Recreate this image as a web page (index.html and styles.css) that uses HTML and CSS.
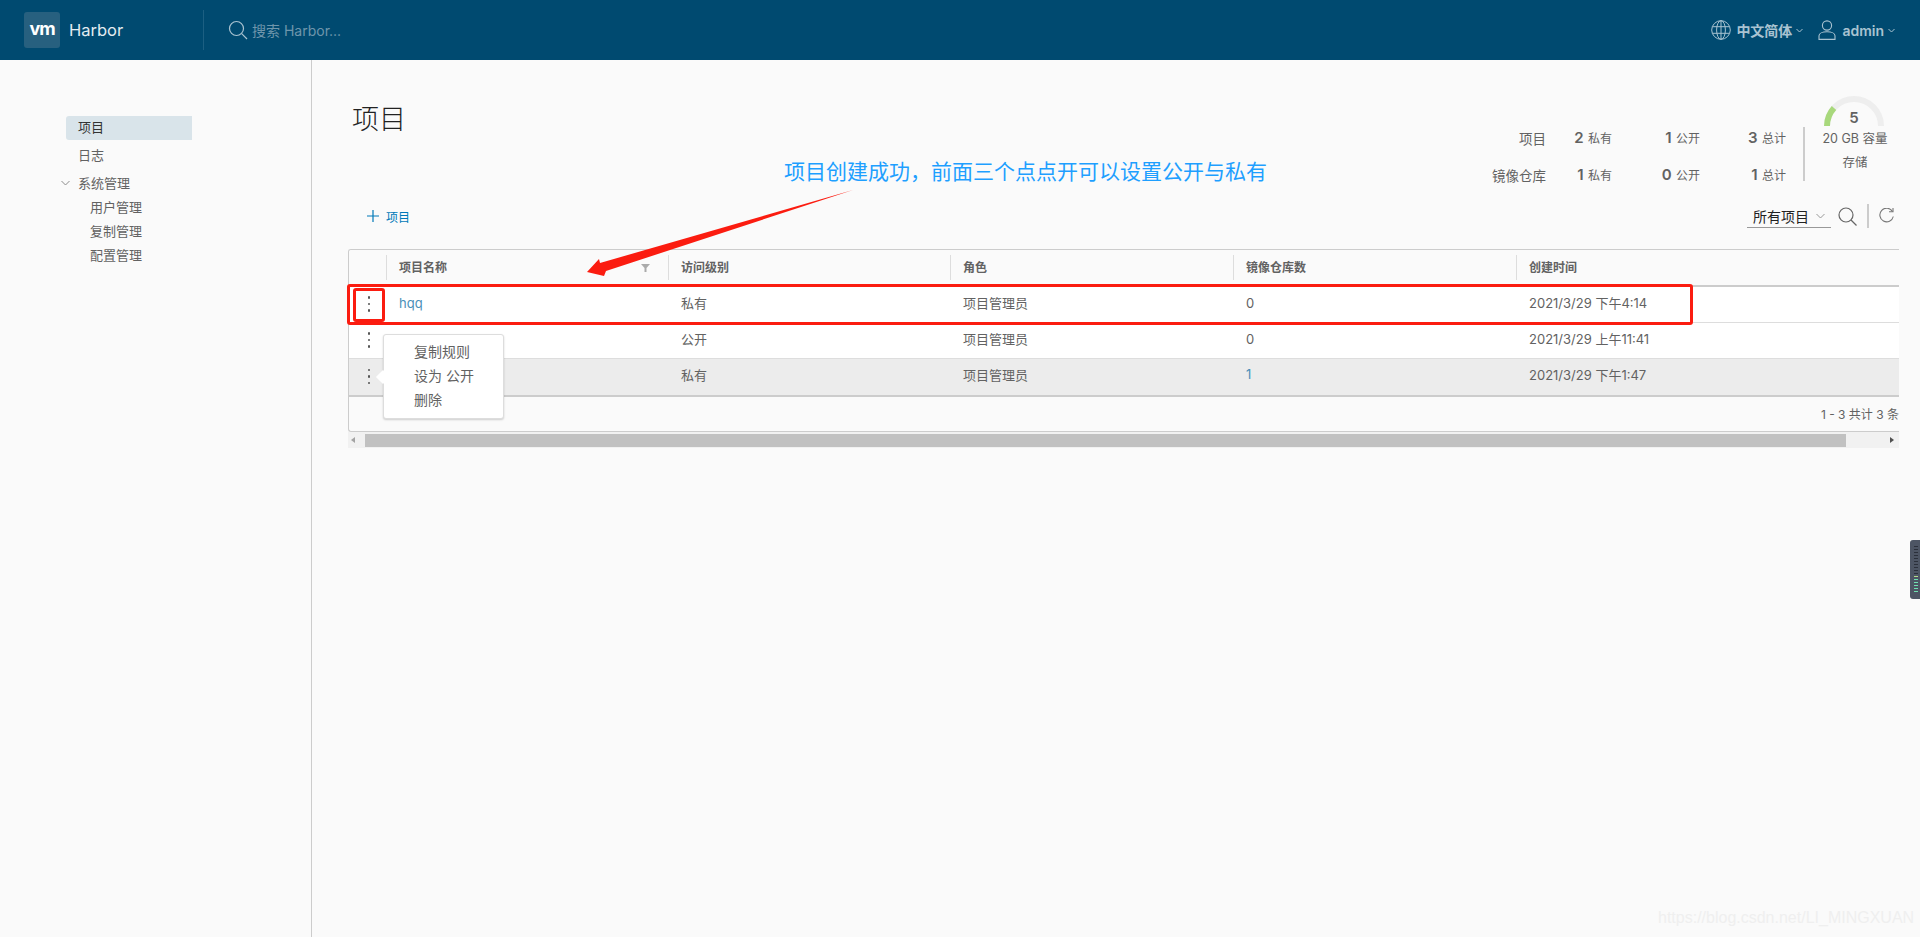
FILE: index.html
```html
<!DOCTYPE html>
<html lang="zh-CN">
<head>
  <meta charset="UTF-8">
  <title>Harbor</title>
  <link rel="stylesheet" href="styles.css">
</head>
<body>
  <header class="topbar">
    <div class="brand">
      <span class="brand-logo">vm</span>
      <span class="brand-name">Harbor</span>
    </div>
    <div class="top-search">
      <svg width="20" height="20" viewBox="0 0 20 20" fill="none" stroke="#a9c3d1" stroke-width="1.2"><circle cx="8.5" cy="8.5" r="7"/><path d="M13.7 13.7l5.3 5.3"/></svg>
      <span class="top-search-text">搜索 Harbor...</span>
    </div>
    <div class="top-right">
      <svg width="20" height="20" viewBox="0 0 20 20" fill="none" stroke="#a9c3d1" stroke-width="1"><circle cx="10" cy="10" r="9.3"/><ellipse cx="10" cy="10" rx="4.4" ry="9.3"/><path d="M10 .7v18.6M1.400 6.700h17.200M1.400 13.300h17.200"/></svg>
      <span class="top-link lang">中文简体</span>
      <svg class="caret" width="7" height="5" viewBox="0 0 7 5" fill="none" stroke="#a9c3d1"><path d="M.5 1l3 3 3-3"/></svg>
      <svg class="user-icon" width="18" height="20" viewBox="0 0 18 20" fill="none" stroke="#a9c3d1" stroke-width="1.1"><circle cx="9" cy="5.500" r="4.600"/><path d="M1 19.400v-3.600c0-2.400 3.500-4 8-4s8 1.600 8 4v3.600z"/></svg>
      <span class="top-link admin">admin</span>
      <svg class="caret" width="7" height="5" viewBox="0 0 7 5" fill="none" stroke="#a9c3d1"><path d="M.5 1l3 3 3-3"/></svg>
    </div>
  </header>

  <div class="layout">
    <nav class="sidebar">
      <a class="nav-item active">项目</a>
      <a class="nav-item">日志</a>
      <a class="nav-item nav-group">
        <svg class="nav-caret" width="9" height="6" viewBox="0 0 9 6" fill="none" stroke="#8c8c8c"><path d="M.5 1l4 4 4-4"/></svg>
        系统管理
      </a>
      <a class="nav-item nav-sub">用户管理</a>
      <a class="nav-item nav-sub">复制管理</a>
      <a class="nav-item nav-sub">配置管理</a>
    </nav>

    <main class="content">
      <div class="page-head">
        <h1>项目</h1>
        <div class="stats">
          <div class="stat-grid">
            <span class="stat-label">项目</span>
            <span class="stat"><b>2</b> 私有</span>
            <span class="stat"><b>1</b> 公开</span>
            <span class="stat"><b>3</b> 总计</span>
            <span class="stat-label">镜像仓库</span>
            <span class="stat"><b>1</b> 私有</span>
            <span class="stat"><b>0</b> 公开</span>
            <span class="stat"><b>1</b> 总计</span>
          </div>
          <div class="stat-divider"></div>
          <div class="storage">
            <div class="gauge">
              <svg width="60" height="30" viewBox="0 0 60 30" fill="none" stroke-width="6">
                <path d="M3 30A27 27 0 0 1 57 30" stroke="#eeeeee"/>
                <path d="M3 30A27 27 0 0 1 10 12" stroke="#a8d87c"/>
              </svg>
              <b class="gauge-num">5</b>
            </div>
            <div class="storage-text">20 GB 容量</div>
            <div class="storage-text">存储</div>
          </div>
        </div>
      </div>

      <div class="toolbar">
        <a class="add-btn">
          <svg width="12" height="12" viewBox="0 0 12 12" stroke="#0079b8" stroke-width="1.2"><path d="M6 0v12M0 6h12"/></svg>
          项目
        </a>
        <div class="tools">
          <div class="filter-select">
            <span>所有项目</span>
            <svg width="9" height="6" viewBox="0 0 9 6" fill="none" stroke="#999"><path d="M.5 1l4 4 4-4"/></svg>
          </div>
          <svg width="19" height="19" viewBox="0 0 19 19" fill="none" stroke="#666" stroke-width="1.2"><circle cx="8" cy="8" r="7"/><path d="M13 13l5.500 5.500"/></svg>
          <div class="tool-divider"></div>
          <svg width="15" height="16" viewBox="0 0 15 16" fill="none" stroke="#777" stroke-width="1.1"><path d="M13.500 3.500A6.800 6.800 0 1 0 14.300 8.500"/><path d="M10 3.800h4V0"/></svg>
        </div>
      </div>

      <div class="grid-wrap">
        <div class="grid-row grid-head">
          <div class="cell"></div>
          <div class="cell">项目名称
            <svg class="filter-icon" width="9" height="8" viewBox="0 0 9 8" fill="#aaa"><path d="M0 0h9L5.500 4v4h-2V4z"/></svg>
          </div>
          <div class="cell">访问级别</div>
          <div class="cell">角色</div>
          <div class="cell">镜像仓库数</div>
          <div class="cell">创建时间</div>
        </div>
        <div class="grid-row">
          <div class="cell kebab"><i></i><i></i><i></i></div>
          <div class="cell"><a class="link">hqq</a></div>
          <div class="cell">私有</div>
          <div class="cell">项目管理员</div>
          <div class="cell">0</div>
          <div class="cell">2021/3/29 下午4:14</div>
        </div>
        <div class="grid-row">
          <div class="cell kebab"><i></i><i></i><i></i></div>
          <div class="cell"></div>
          <div class="cell">公开</div>
          <div class="cell">项目管理员</div>
          <div class="cell">0</div>
          <div class="cell">2021/3/29 上午11:41</div>
        </div>
        <div class="grid-row row-hover">
          <div class="cell kebab"><i></i><i></i><i></i></div>
          <div class="cell"></div>
          <div class="cell">私有</div>
          <div class="cell">项目管理员</div>
          <div class="cell"><a class="link">1</a></div>
          <div class="cell">2021/3/29 下午1:47</div>
        </div>
        <div class="grid-foot"><span>1 - 3 共计 3 条</span></div>
      </div>
      <div class="scrollbar">
        <span class="arrow-left"></span>
        <div class="thumb"></div>
        <span class="arrow-right"></span>
      </div>
    </main>
  </div>

  <!-- 行操作菜单 -->
  <div class="row-menu">
    <span class="row-menu-tip"></span>
    <a>复制规则</a>
    <a>设为 公开</a>
    <a>删除</a>
  </div>

  <!-- 截图上的标注 -->
  <div class="note-text">项目创建成功，前面三个点点开可以设置公开与私有</div>
  <svg class="note-arrow" width="300" height="110" viewBox="0 0 300 110">
    <path d="M7 102L19 89L20 93L273 20L26 101L24 106z" fill="#fb1c10"/>
  </svg>
  <div class="note-box note-row"></div>
  <div class="note-box note-kebab"></div>

  <div class="side-widget"><div class="meter"></div></div>
  <div class="watermark">https://blog.csdn.net/LI_MINGXUAN</div>
</body>
</html>
```

FILE: styles.css
```css
* {
  box-sizing: border-box;
}

html, body {
  margin: 0;
  height: 100%;
  overflow: hidden;
}

body {
  font-family: "Inter", "Noto Sans CJK SC", sans-serif;
  font-size: 13px;
  color: #626262;
  background-color: #fafafa;
  position: relative;
}

/* top bar */
.topbar {
  height: 60px;
  background-color: #004a70;
  display: flex;
  align-items: center;
  padding-left: 24px;
  color: #dce6eb;
}

.brand {
  display: flex;
  align-items: center;
  width: 180px;
  height: 40px;
  border-right: 1px solid #1c5f82;
}

.brand-logo {
  width: 36px;
  height: 36px;
  background-color: #27607f;
  border-radius: 3px;
  color: #fff;
  font-weight: 700;
  font-size: 18px;
  letter-spacing: -1px;
  line-height: 34px;
  text-align: center;
}

.brand-name {
  margin-left: 9px;
  font-size: 16.500px;
  color: #e3ecf0;
}

.top-search {
  display: flex;
  align-items: center;
  margin-left: 24px;
}

.top-search-text {
  margin-left: 4px;
  font-size: 14px;
  color: #6f96ac;
}

.top-right {
  margin-left: auto;
  display: flex;
  align-items: center;
  padding-right: 25px;
}

.top-link {
  font-size: 14px;
  font-weight: 600;
  color: #a9c3d1;
}

.lang {
  margin-left: 5px;
}

.admin {
  margin-left: 6px;
}

.caret {
  margin-left: 4px;
}

.user-icon {
  margin-left: 15px;
}

/* layout */
.layout {
  display: flex;
  height: calc(100vh - 60px);
}

.sidebar {
  width: 312px;
  flex: none;
  border-right: 1px solid #ccc;
  padding: 56px 0 0 66px;
  display: flex;
  flex-direction: column;
}

.nav-item {
  width: 126px;
  height: 24px;
  line-height: 22px;
  padding-left: 12px;
  color: #626262;
  position: relative;
}

.nav-item.active {
  background-color: #d9e4ea;
  border-radius: 3px 0 0 3px;
  color: #333;
  margin-bottom: 4px;
}

.nav-group {
  margin: 4px 0 0;
}

.nav-caret {
  position: absolute;
  left: -5px;
  top: 8px;
}

.nav-sub {
  padding-left: 24px;
}

.content {
  flex: 1;
  min-width: 0;
  padding: 36px 21px 0 36px;
}

.page-head {
  height: 100px;
  display: flex;
  justify-content: space-between;
}

h1 {
  margin: 0 0 0 4px;
  font-size: 27px;
  font-weight: 300;
  line-height: 48px;
  color: #222;
}

.stats {
  display: flex;
  align-items: flex-start;
}

.stat-grid {
  margin-top: 23px;
  margin-right: 17px;
  display: grid;
  grid-template-columns: auto 66px 88px 86px;
  grid-auto-rows: 37px;
  align-items: center;
  justify-items: end;
  font-size: 12px;
}

.stat-label {
  font-size: 13.500px;
}

.stat b {
  font-size: 15px;
  font-weight: 600;
  margin-right: 1px;
}

.stat-divider {
  width: 2px;
  height: 54px;
  margin: 31px 4px 0 0;
  background-color: #ccc;
}

.storage {
  width: 92px;
  margin-right: -2px;
  text-align: center;
}

.gauge {
  position: relative;
  height: 31px;
  margin-left: -2px;
}

.gauge-num {
  position: absolute;
  left: 0;
  right: 0;
  top: 12px;
  font-size: 15px;
  line-height: 20px;
  font-weight: 600;
}

.storage-text {
  line-height: 24px;
  font-size: 12.500px;
}

/* toolbar */
.toolbar {
  height: 40px;
  margin-bottom: 13px;
  display: flex;
  align-items: center;
  justify-content: space-between;
}

.add-btn {
  margin-left: 19px;
  display: flex;
  align-items: center;
  gap: 7px;
  font-size: 12px;
  color: #0079b8;
}

.tools {
  display: flex;
  align-items: center;
  padding-right: 5px;
}

.filter-select {
  width: 84px;
  height: 24px;
  border-bottom: 1px solid #999;
  display: flex;
  align-items: center;
  justify-content: space-between;
  padding: 0 6px;
  font-size: 14px;
  color: #222;
  margin-right: 7px;
}

.tool-divider {
  width: 2px;
  height: 24px;
  background-color: #ccc;
  margin: 0 10px;
}

/* datagrid */
.grid-wrap {
  border-top: 1px solid #ccc;
  border-left: 1px solid #ccc;
  border-bottom: 1px solid #ccc;
  border-radius: 3px 0 0 3px;
  overflow: hidden;
}

.grid-row {
  display: grid;
  grid-template-columns: 37px 282px 282px 283px 283px 1fr;
  height: 36px;
  background-color: #fff;
  border-bottom: 1px solid #ddd;
}

.grid-head {
  height: 37px;
  background-color: #fafafa;
  border-bottom: 2px solid #ccc;
  font-weight: 600;
  font-size: 12px;
}

.grid-head .cell {
  margin: 5px 0;
  border-left: 1px solid #ddd;
  height: 25px;
  padding-bottom: 2px;
}

.grid-head .cell:first-child {
  border-left: 0;
}

.row-hover {
  background-color: #ececec;
  height: 38px;
  border-bottom: 2px solid #ccc;
}

.cell {
  display: flex;
  align-items: center;
  padding-left: 12px;
  position: relative;
}

.grid-row:not(.grid-head) .cell:not(.kebab) {
  padding: 0 0 4px 13px;
}

.grid-row.row-hover .cell:not(.kebab) {
  padding-bottom: 6px;
}

.filter-icon {
  position: absolute;
  right: 18px;
  top: 9px;
}

.kebab {
  padding: 0 0 1px 18.500px;
  flex-direction: column;
  justify-content: center;
  align-items: flex-start;
  gap: 4px;
}

.kebab i {
  width: 2.500px;
  height: 2.500px;
  background-color: #555;
  border-radius: 50%;
}

.link {
  color: #4a8fb8;
}

.grid-foot {
  height: 34px;
  padding-bottom: 2px;
  display: flex;
  align-items: center;
  justify-content: flex-end;
  white-space: nowrap;
  font-size: 12px;
}

.scrollbar {
  height: 16px;
  background-color: #f1f1f1;
  display: flex;
  align-items: center;
  position: relative;
}

.thumb {
  margin-left: 17px;
  width: 1481px;
  height: 13px;
  background-color: #c1c1c1;
}

.arrow-left,
.arrow-right {
  position: absolute;
  top: 5px;
  border: 3.500px solid transparent;
}

.arrow-left {
  left: 3px;
  border-left: 0;
  border-right: 4px solid #a3a3a3;
}

.arrow-right {
  right: 5px;
  border-right: 0;
  border-left: 4px solid #505050;
}

/* row menu */
.row-menu {
  position: absolute;
  left: 383px;
  top: 334px;
  width: 121px;
  height: 85px;
  background-color: #fff;
  border: 1px solid #ddd;
  border-radius: 3px;
  box-shadow: 0 1px 2px rgba(0,0,0,0.18);
  padding: 5px 0 0 30px;
  display: flex;
  flex-direction: column;
  font-size: 14px;
}

.row-menu a {
  height: 24px;
  line-height: 24px;
}

.row-menu-tip {
  position: absolute;
  left: -6px;
  top: 37px;
  width: 10px;
  height: 10px;
  background-color: #fff;
  transform: rotate(45deg);
}

/* annotations */
.note-text {
  position: absolute;
  left: 784px;
  top: 156px;
  font-size: 21px;
  line-height: 32px;
  white-space: nowrap;
  color: #1e9fff;
}

.note-arrow {
  position: absolute;
  left: 580px;
  top: 170px;
}

.note-box {
  position: absolute;
  border: 3px solid #fb1c10;
  border-radius: 3px;
}

.note-row {
  left: 347px;
  top: 284px;
  width: 1346px;
  height: 41px;
}

.note-kebab {
  left: 353px;
  top: 288px;
  width: 32px;
  height: 34px;
}

/* desktop widget on the right edge */
.side-widget {
  position: absolute;
  right: 0;
  top: 540px;
  width: 10px;
  height: 59px;
  background-color: #4d5564;
  border-radius: 3px 0 0 3px;
  padding: 6px 0 0 4px;
}

.meter {
  width: 4px;
  height: 47px;
  background:
    repeating-linear-gradient(to bottom, transparent 0 1px, #4d5564 1px 3px),
    linear-gradient(to bottom, #2b303b 0 28px, #b5d98a 28px 32px, #6fe0b0 32px);
}

.watermark {
  position: absolute;
  left: 1658px;
  top: 908px;
  font-family: "Liberation Sans", sans-serif;
  font-size: 16px;
  line-height: 20px;
  color: #efefef;
}
```
